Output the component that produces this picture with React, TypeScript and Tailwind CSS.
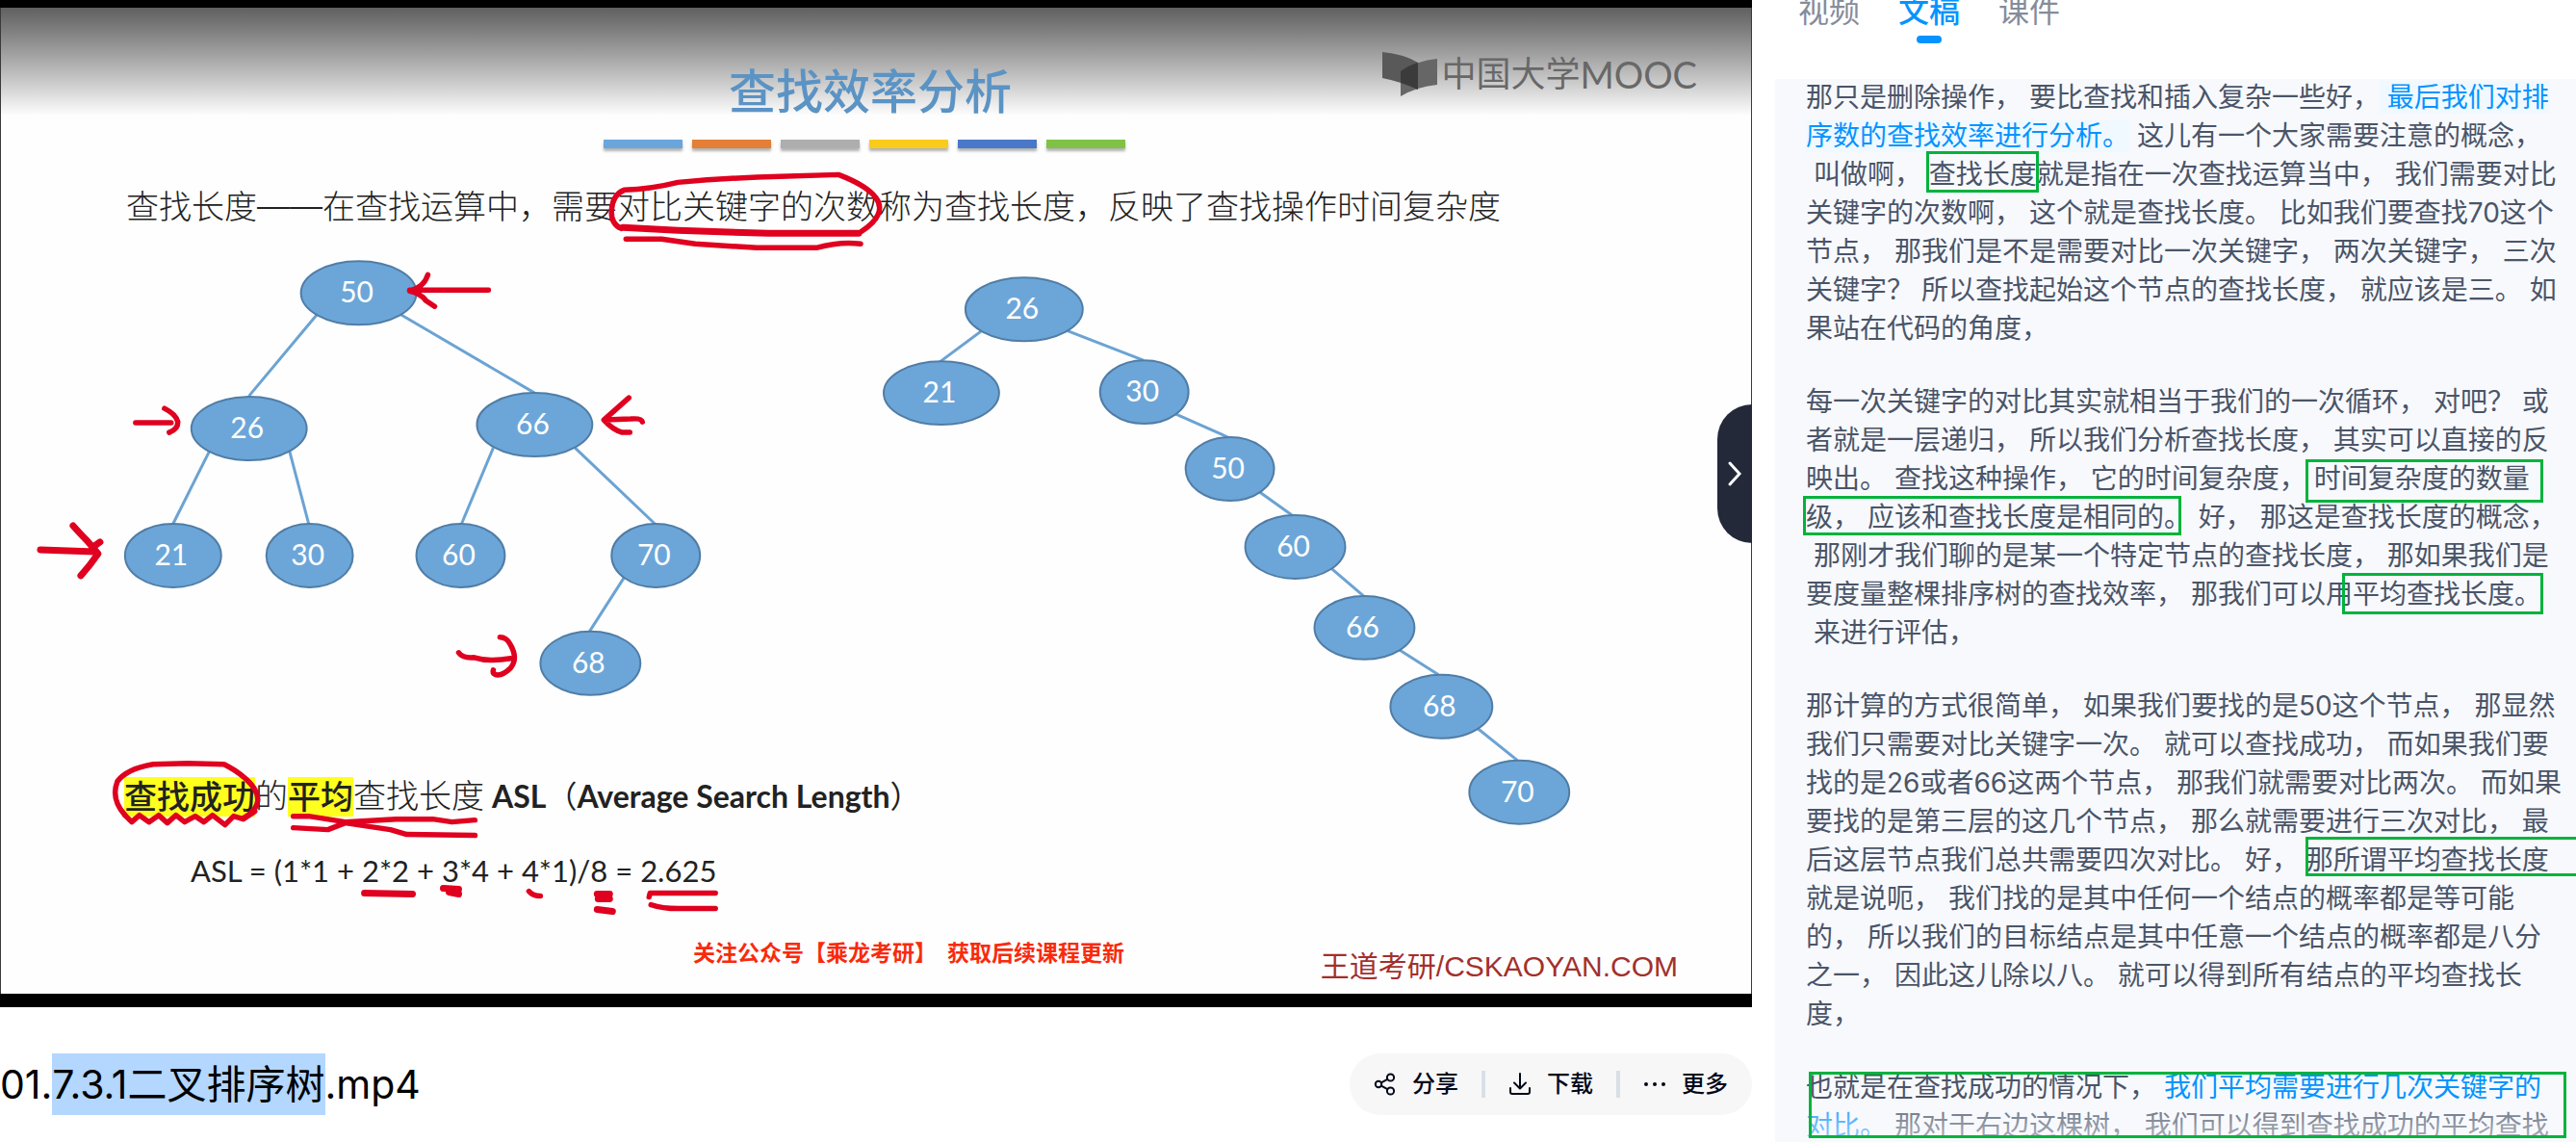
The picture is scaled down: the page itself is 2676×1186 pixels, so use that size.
import type { ReactNode } from "react";

type TreeNode = { label: string; cx: number; cy: number; rx: number };
type Edge = [number, number, number, number];

const NODES: TreeNode[] = [
  { label: "50", cx: 372, cy: 304, rx: 60 },
  { label: "26", cx: 258, cy: 445, rx: 60 },
  { label: "66", cx: 555, cy: 441, rx: 60 },
  { label: "21", cx: 179, cy: 577, rx: 50 },
  { label: "30", cx: 321, cy: 577, rx: 45 },
  { label: "60", cx: 478, cy: 577, rx: 46 },
  { label: "70", cx: 681, cy: 577, rx: 46 },
  { label: "68", cx: 613, cy: 689, rx: 52 },
  { label: "26", cx: 1064, cy: 321, rx: 61 },
  { label: "21", cx: 978, cy: 408, rx: 60 },
  { label: "30", cx: 1189, cy: 407, rx: 46 },
  { label: "50", cx: 1278, cy: 487, rx: 46 },
  { label: "60", cx: 1346, cy: 568, rx: 52 },
  { label: "66", cx: 1418, cy: 652, rx: 52 },
  { label: "68", cx: 1498, cy: 734, rx: 53 },
  { label: "70", cx: 1579, cy: 823, rx: 52 },
];

const EDGES: Edge[] = [
  [329, 326, 258, 411],
  [415, 326, 555, 408],
  [217, 468, 179, 544],
  [300, 468, 320, 544],
  [512, 465, 479, 544],
  [597, 465, 680, 544],
  [648, 600, 612, 656],
  [1019, 344, 976, 376],
  [1108, 343, 1188, 374],
  [1222, 430, 1276, 454],
  [1309, 511, 1344, 536],
  [1383, 590, 1417, 619],
  [1454, 675, 1495, 701],
  [1536, 757, 1577, 790],
];

const INK: string[] = [
  "M645 237 Q634 232 635 218 Q636 202 648 197 Q676 196 704 189 Q760 184 810 183 L871 181 Q900 192 910 205 Q922 222 895 240",
  "M425 301 L507 301 M444 285 Q440 298 425 302 Q436 304 442 312 L451 318",
  "M140 439 L177 439 M170 424 Q182 430 184 438 Q184 446 175 449",
  "M667 438 Q666 434 655 435 L628 436 M653 413 L627 436 Q636 446 646 449 L654 449",
  "M476 678 Q480 684 492 683 Q508 688 530 684 M519 662 Q526 662 530 670 Q538 684 530 694 Q522 702 515 701 Q511 700 512 696",
  "M129 847 Q114 830 121 812 Q130 799 158 794 L194 793 L232 794 Q244 800 252 807 Q268 820 267 832 Q266 842 252 850",
  "M129 847 L136 854 L144 847 L154 854 L164 847 L173 855 L182 847 L191 854 L202 848 L211 854 L220 847 L233 857 L242 848 L252 851 L264 843",
  "M304 848 L320 848 L358 854 L411 851 L449 851 L469 854 L493 852",
  "M304 860 L340 862 L358 855 L405 862 L422 867 L493 868",
  "M650 248 L687 248 L722 253 L786 257 L848 257 Q874 250 894 253",
  "M674 932 L675 928 L743 928 M676 940 Q688 944 704 944 L743 944",
  "M549 926 Q553 931 561 931",
];

const HEAVY_INK: string[] = [
  "M647 236 L704 239 L798 242 L892 242",
  "M41 571 L98 573 M75 546 Q82 554 90 562 L101 575 Q92 588 83 598 M103 563 L96 568",
  "M378 928 L428 929",
  "M460 923 L476 924 M466 927 L476 929",
  "M620 929 L633 929 M621 934 L633 934",
  "M620 945 L636 947",
];

function SlideDrawing() {
  return (
    <svg viewBox="0 8 1820 1024" className="absolute inset-0 h-full w-full" role="img" aria-label="二叉排序树示意图">
      <g stroke="#6ba3d3" strokeWidth="3">
        {EDGES.map(([x1, y1, x2, y2]) => (
          <line key={`${x1}-${y1}`} x1={x1} y1={y1} x2={x2} y2={y2} />
        ))}
      </g>
      {NODES.map((n) => (
        <g key={`${n.cx}-${n.cy}`}>
          <ellipse cx={n.cx} cy={n.cy} rx={n.rx} ry={33} fill="#6ca6d8" stroke="#507da6" strokeWidth="2" />
          <text x={n.cx - 2} y={n.cy + 10} textAnchor="middle" fill="#fff" className="font-['Lato'] text-[30px]">
            {n.label}
          </text>
        </g>
      ))}
      <g fill="none" stroke="#e0001f" strokeLinecap="round" strokeLinejoin="round">
        {INK.map((d) => (
          <path key={d} d={d} strokeWidth="5.5" />
        ))}
        {HEAVY_INK.map((d) => (
          <path key={d} d={d} strokeWidth="7" />
        ))}
      </g>
    </svg>
  );
}

function MoocLogo() {
  return (
    <div className="absolute top-[45px] right-[56px] flex items-center text-[#686868]">
      <svg viewBox="0 0 57 48" className="h-12 w-[57px]" aria-hidden="true">
        <path d="M0 1 Q22 3 37 12 V40 Q20 32 0 28 Z" fill="#595959" />
        <path d="M57 8 V35 Q36 37 19 47 V21 Q36 10 57 8 Z" fill="#666666" />
        <path d="M37 12 V40 Q28 36 19 33 V21 Q27 15 37 12 Z" fill="#3b3b3b" />
      </svg>
      <span className="ml-1 text-[36px] leading-12">中国大学</span>
      <span className="font-['Lato'] text-[38px] leading-12">MOOC</span>
    </div>
  );
}

const BAR_COLORS = ["bg-[#6aa5dc]", "bg-[#e37f36]", "bg-[#aeaeae]", "bg-[#fbcb1c]", "bg-[#4a78c8]", "bg-[#80c246]"];

function VideoPlayer() {
  return (
    <section aria-label="视频" className="relative bg-black pt-2 pb-[14px]">
      <div className="relative flex aspect-[1820/1024] flex-col border-x border-[#3a3a3a] bg-[#fefefe] text-[#222]">
        <div className="absolute inset-x-0 top-0 h-28 bg-linear-to-b from-[#606060] to-[#fefefe]" />
        <MoocLogo />
        <h1 className="relative mt-[60px] pr-3 text-center text-[49px] leading-14 font-medium text-[#5b93c4]">查找效率分析</h1>
        <div className="mt-[21px] flex justify-center gap-[10px] pr-6">
          {BAR_COLORS.map((c) => (
            <div key={c} className={`h-[9px] w-[82px] shadow-[0_3px_3px_rgba(0,0,0,0.3)] ${c}`} />
          ))}
        </div>
        <p className="mt-[37px] pl-[130px] text-[34px] leading-12 font-light whitespace-nowrap">
          查找长度——在查找运算中，需要对比关键字的次数称为查找长度，反映了查找操作时间复杂度
        </p>
        <div className="flex-1" />
        <p className="flex items-center pl-32 text-[34px] leading-12 font-light whitespace-nowrap">
          <mark className="bg-[#ffff1e] leading-[41px] font-medium text-[#222]">查找成功</mark>
          <span>的</span>
          <mark className="bg-[#ffff1e] leading-[41px] font-medium text-[#222]">平均</mark>
          <span>查找长度</span>
          <b className="pl-2 font-['Lato','Noto_Sans_CJK_SC'] text-[32px] font-bold">
            ASL<span className="font-normal">（</span>Average Search Length<span className="font-normal">）</span>
          </b>
        </p>
        <p className="mt-[29px] pl-[197px] font-['Lato'] text-[31px] leading-12">
          ASL = (1*1 + 2*2 + 3*4 + 4*1)/8 = 2.625
        </p>
        <footer className="mt-[42px] mb-[6px] flex items-start justify-between pr-[76px] pl-[719px]">
          <span className="text-[23px] leading-10 font-bold text-[#f92a0c]">关注公众号【乘龙考研】{"\u00a0 "}获取后续课程更新</span>
          <span className="mt-3 font-['Liberation_Sans','Noto_Sans_CJK_SC'] text-[30px] leading-11 text-[#a2302c]">
            王道考研/CSKAOYAN.COM
          </span>
        </footer>
        <SlideDrawing />
      </div>
      <button
        type="button"
        aria-label="收起侧栏"
        className="absolute top-[420px] right-0 flex h-36 w-9 items-center justify-center rounded-l-[36px] bg-[#232938]"
      >
        <svg viewBox="0 0 16 28" className="h-7 w-4" fill="none" stroke="#fff" strokeWidth="3" strokeLinecap="round" aria-hidden="true">
          <path d="M3 3 L13 14 L3 25" />
        </svg>
      </button>
    </section>
  );
}

function ToolButton({ label, children }: { label: string; children: ReactNode }) {
  return (
    <button type="button" className="flex items-center gap-4 text-[24px] leading-8 font-medium text-[#03081a]">
      <svg viewBox="0 0 24 24" className="size-6" fill="none" stroke="currentColor" strokeWidth="2" strokeLinecap="round" strokeLinejoin="round" aria-hidden="true">
        {children}
      </svg>
      {label}
    </button>
  );
}

function FileBar() {
  return (
    <div className="mt-12 flex items-center justify-between">
      <h2 className="text-[41px] leading-16 text-black">
        01.<span className="inline-block bg-[#b3d7ff]">7.3.1二叉排序树</span>.mp4
      </h2>
      <div className="flex h-16 items-center gap-6 rounded-full bg-[#f7f7f7] px-[25px]">
        <ToolButton label="分享">
          <circle cx="5" cy="12" r="3.2" />
          <circle cx="17.5" cy="5" r="3.6" />
          <circle cx="17.5" cy="19" r="3.6" />
          <path d="M7.9 10.4 L14.3 6.8 M7.9 13.6 L14.3 17.2" />
        </ToolButton>
        <div className="h-7 w-1 bg-[#d9dfe7]" />
        <ToolButton label="下载">
          <path d="M12 1 V16 M6 10.5 L12 16.5 L18 10.5 M2 16 V20 Q2 22 4 22 H20 Q22 22 22 20 V16" />
        </ToolButton>
        <div className="h-7 w-1 bg-[#d9dfe7]" />
        <ToolButton label="更多">
          <g fill="currentColor" stroke="none">
            <circle cx="3" cy="12" r="2" />
            <circle cx="12" cy="12" r="2" />
            <circle cx="21" cy="12" r="2" />
          </g>
        </ToolButton>
      </div>
    </div>
  );
}

const TABS = ["视频", "文稿", "课件"];

function Tabs() {
  return (
    <nav className="h-[82px] overflow-hidden pl-6">
      <div role="tablist" className="-mt-2 flex gap-10">
        {TABS.map((t) => {
          const active = t === "文稿";
          return (
            <button
              key={t}
              type="button"
              role="tab"
              aria-selected={active}
              className={`flex flex-col items-center gap-[5px] text-[32px] leading-10 ${active ? "font-medium text-[#0594ff]" : "text-[#848c9b]"}`}
            >
              {t}
              {active && <span className="h-2 w-[26px] rounded-full bg-[#0594ff]" />}
            </button>
          );
        })}
      </div>
    </nav>
  );
}

function Marked({ children }: { children: ReactNode }) {
  return <span className="bg-[#f0f9ff] text-[#0594ff]">{children}</span>;
}

/* Hand-placed frames over the transcript. */
const FRAMES = [
  "top-[75px] left-[157px] h-[43px] w-[117px]",
  "top-[395px] left-[551px] h-[45px] w-[247px]",
  "top-[433px] left-[29px] h-[41px] w-[393px]",
  "top-[513px] left-[589px] h-[43px] w-[209px]",
  "top-[787px] left-[551px] h-[41px] w-[300px]",
  "top-[1031px] left-[35px] h-[69px] w-[787px]",
];

function Transcript() {
  return (
    <div className="relative flex-1 overflow-hidden bg-[#f8f9fd] pr-3 pl-8">
      <div className="-mt-px flex flex-col gap-9 text-[28px] leading-10 text-[#4a5568]">
        <p>
          那只是删除操作， 要比查找和插入复杂一些好，<Marked> 最后我们对排序数的查找效率进行分析。</Marked> 这儿有一个大家需要注意的概念，
          <wbr />
          {"\u00a0"}叫做啊， 查找长度就是指在一次查找运算当中， 我们需要对比关键字的次数啊， 这个就是查找长度。
          比如我们要查找70这个节点， 那我们是不是需要对比一次关键字， 两次关键字， 三次关键字？
          所以查找起始这个节点的查找长度， 就应该是三。 如果站在代码的角度，
        </p>
        <p>
          每一次关键字的对比其实就相当于我们的一次循环， 对吧？ 或者就是一层递归， 所以我们分析查找长度，
          其实可以直接的反映出。 查找这种操作， 它的时间复杂度， 时间复杂度的数量级， 应该和查找长度是相同的。 好，
          那这是查找长度的概念，
          <wbr />
          {"\u00a0"}那刚才我们聊的是某一个特定节点的查找长度， 那如果我们是要度量整棵排序树的查找效率，
          那我们可以用平均查找长度。
          <wbr />
          {"\u00a0"}来进行评估，
        </p>
        <p>
          那计算的方式很简单， 如果我们要找的是50这个节点， 那显然我们只需要对比关键字一次。 就可以查找成功，
          而如果我们要找的是26或者66这两个节点， 那我们就需要对比两次。 而如果要找的是第三层的这几个节点，
          那么就需要进行三次对比， 最后这层节点我们总共需要四次对比。 好， 那所谓平均查找长度
          <wbr />
          就是说呃， 我们找的是其中任何一个结点的概率都是等可能的， 所以我们的目标结点是其中任意一个结点的概率都是八分之一，
          因此这儿除以八。 就可以得到所有结点的平均查找长度，
        </p>
        <p>
          也就是在查找成功的情况下， <span className="text-[#0594ff]">我们平均需要进行几次关键字的对比。</span> 那对于右边这棵树，
          我们可以得到查找成功的平均查找
        </p>
      </div>
      <div className="absolute inset-x-0 bottom-0 h-10 bg-linear-to-b from-[#f8f9fd]/15 to-[#f8f9fd]/60" />
      {FRAMES.map((f) => (
        <div key={f} className={`absolute border-[3px] border-[#00b33c] ${f}`} />
      ))}
    </div>
  );
}

export default function App() {
  return (
    <div className="flex h-screen gap-6 overflow-hidden bg-white font-['Inter','Noto_Sans_CJK_SC',sans-serif]" lang="zh-CN">
      <main className="min-w-0 flex-1">
        <VideoPlayer />
        <FileBar />
      </main>
      <aside className="flex w-[832px] flex-col">
        <Tabs />
        <Transcript />
      </aside>
    </div>
  );
}
